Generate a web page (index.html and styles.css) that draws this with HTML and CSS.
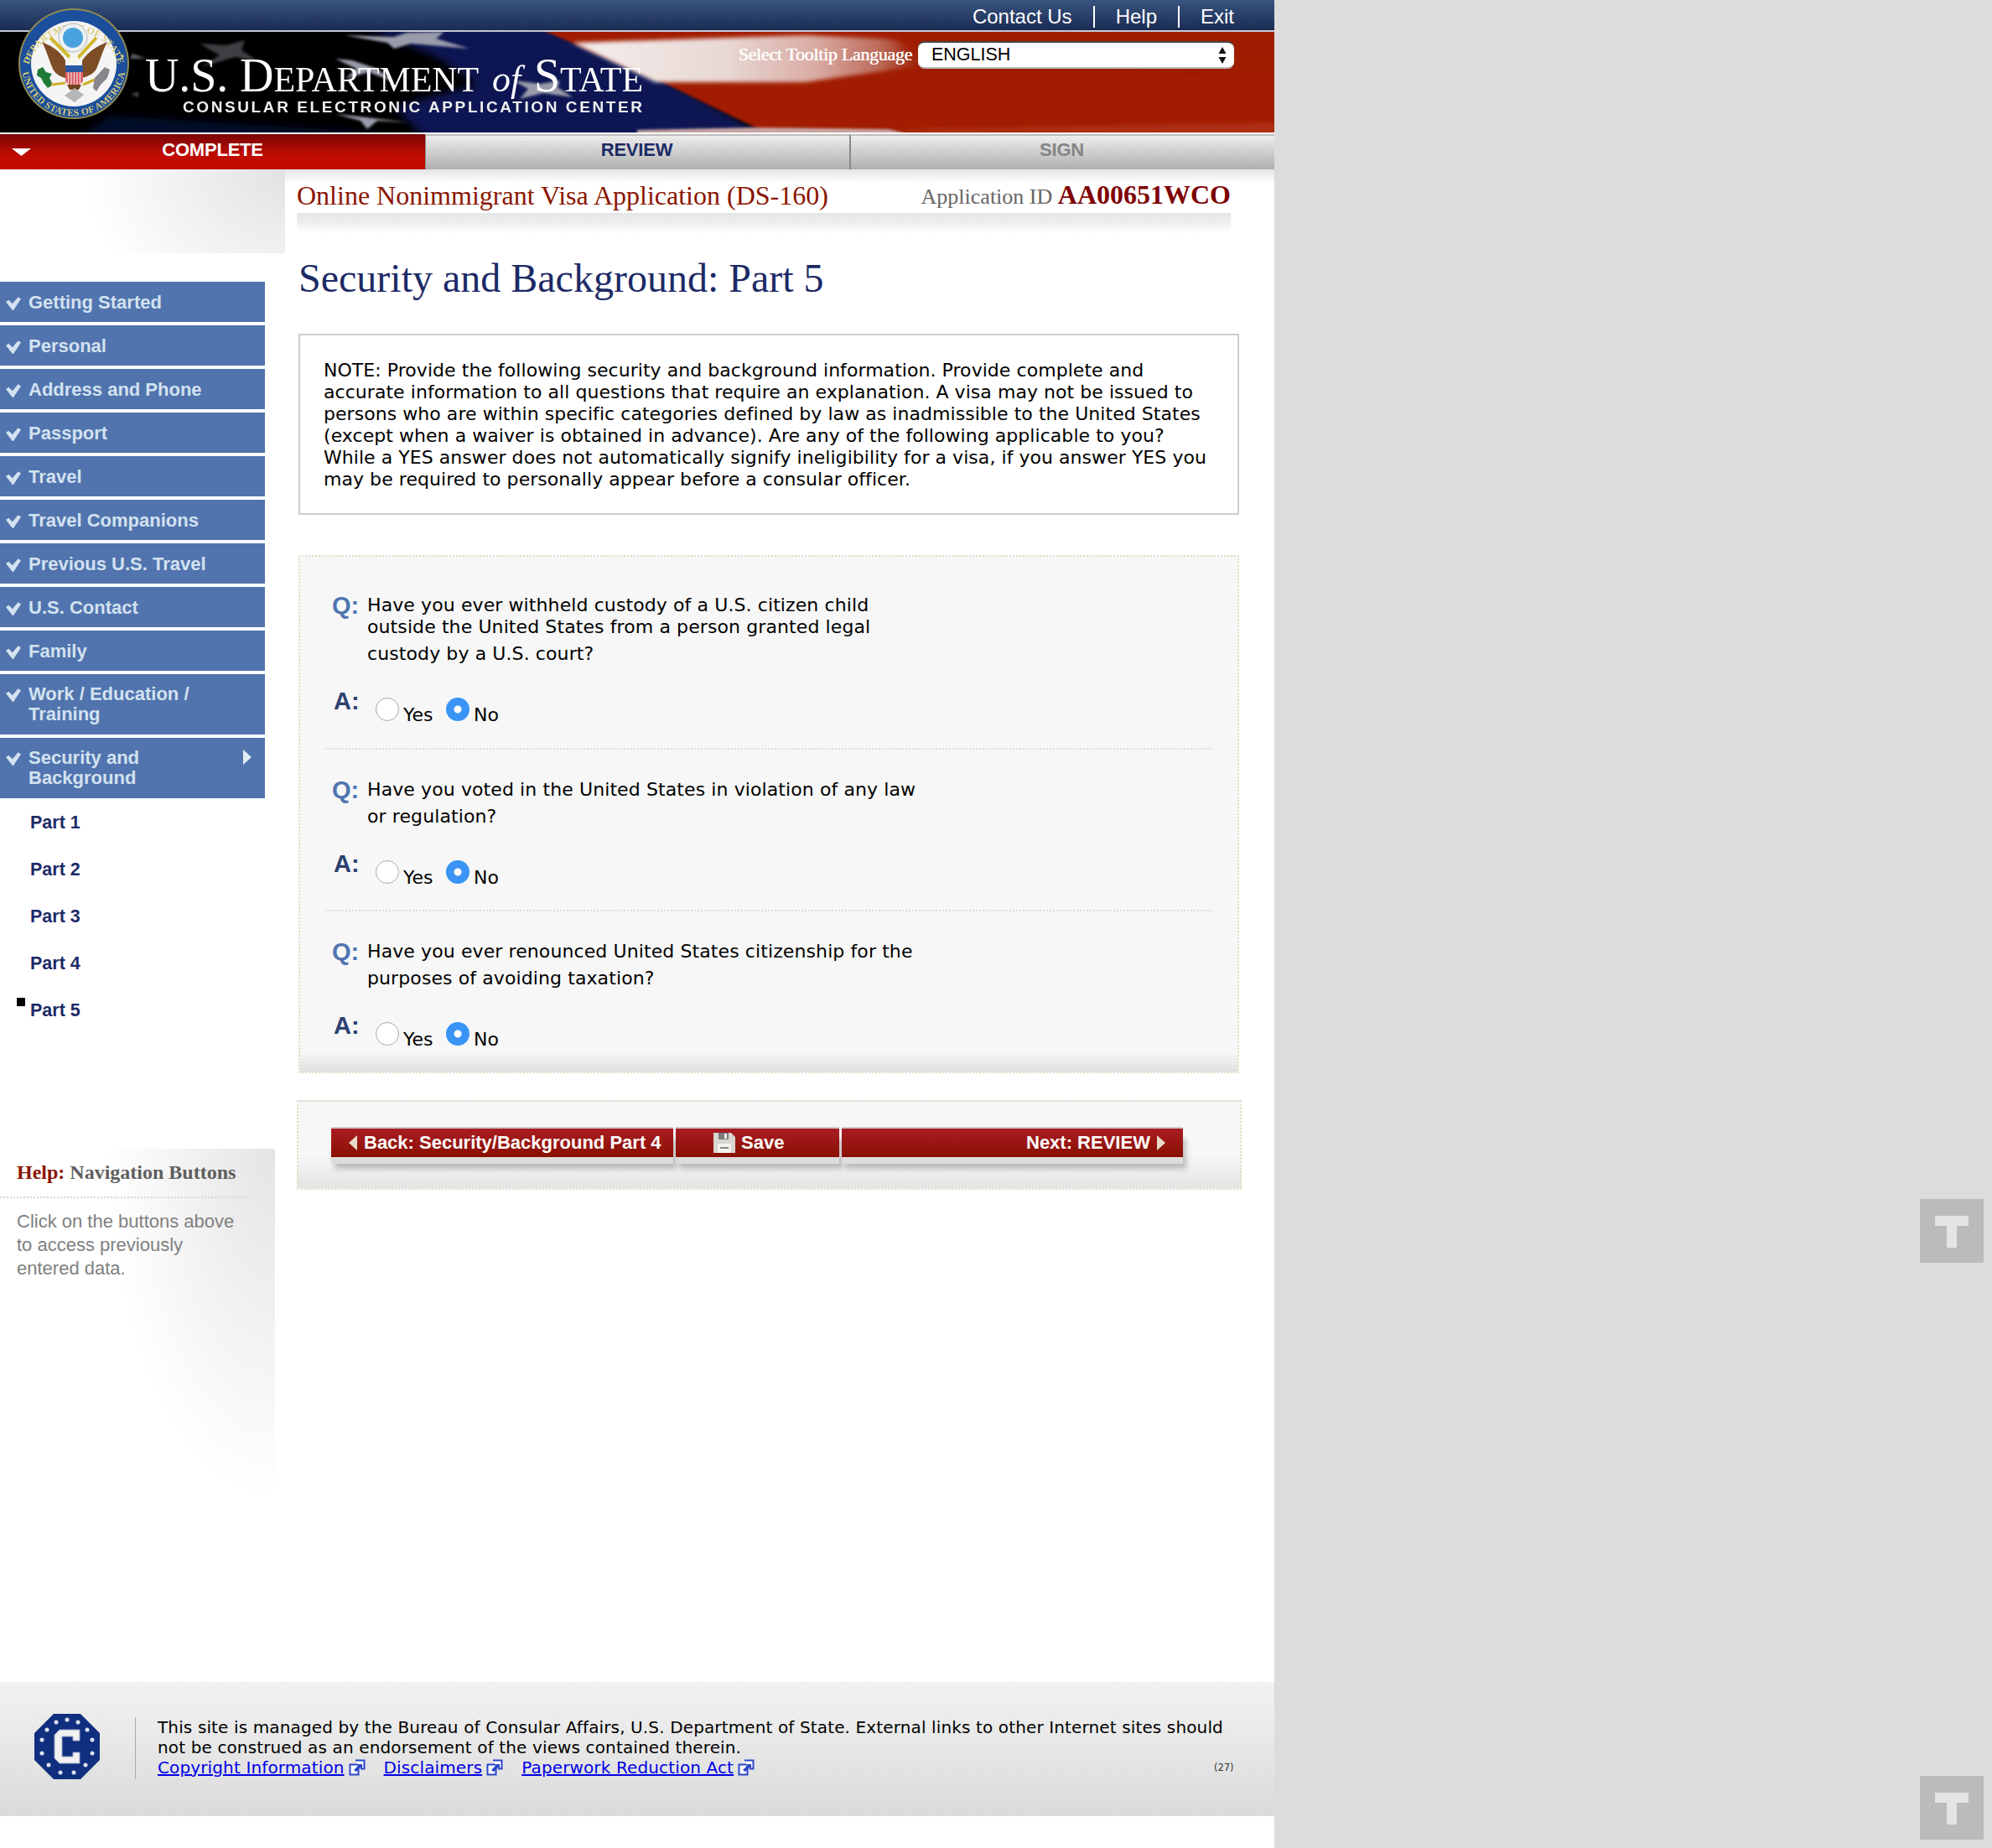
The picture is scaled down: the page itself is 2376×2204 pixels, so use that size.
FILE: index.html
```html
<!DOCTYPE html>
<html lang="en">
<head>
<meta charset="utf-8">
<title>Security and Background: Part 5</title>
<link rel="stylesheet" href="styles.css">
</head>
<body>
<div class="page">
  <header class="masthead">
    <div class="topbar">
      <a class="toplink">Contact Us</a><a class="toplink">Help</a><a class="toplink">Exit</a>
    </div>
    <div class="banner">
      <svg class="flag" viewBox="0 0 1520 120" preserveAspectRatio="none" aria-hidden="true">
        <defs>
          <filter id="b6" x="-10%" y="-30%" width="120%" height="160%"><feGaussianBlur stdDeviation="5"/></filter>
          <filter id="b2" x="-10%" y="-30%" width="120%" height="160%"><feGaussianBlur stdDeviation="2.5"/></filter>
          <filter id="b1" x="-10%" y="-30%" width="120%" height="160%"><feGaussianBlur stdDeviation="1.5"/></filter>
          <linearGradient id="wht" gradientUnits="userSpaceOnUse" x1="680" x2="1090" y1="0" y2="0">
            <stop offset="0" stop-color="#f4efee"/><stop offset=".45" stop-color="#e8d8d4"/><stop offset=".72" stop-color="#d9aaa2"/><stop offset=".9" stop-color="#bb6a58"/><stop offset="1" stop-color="#a32a12"/>
          </linearGradient>
        </defs>
        <rect width="1520" height="120" fill="#000"/>
        <g filter="url(#b6)">
          <polygon points="425,-10 650,-10 800,60 925,130 510,130 470,90 570,62 520,30" fill="#0e1552"/>
          <polygon points="90,130 130,100 260,108 420,118 510,130" fill="#060a2c"/>
        </g>
        <polygon points="645,-3 1530,-3 1530,122 917,122 790,60" fill="#a11a04" filter="url(#b1)"/>
        <polygon points="683,13 960,4 1100,10 1100,40 960,60 782,60" fill="url(#wht)" filter="url(#b2)"/>
        <polygon points="1060,0 1530,0 1530,46 1100,38" fill="#a01c02" filter="url(#b6)"/>
        <polygon points="760,117 900,114 1060,116 1085,122 760,122" fill="#c9a7a5" filter="url(#b1)"/>
        <polygon points="1080,116 1530,108 1530,122 1085,122" fill="#ad2f18" filter="url(#b2)"/>
        <g fill="#9a9cab" filter="url(#b1)">
          <polygon points="485,1 470,6 411,4 462,13 470,20 490,14 560,20 520,8 530,0"/>
          <polygon points="645,62 612,58 630,68 620,80 648,73 683,78 665,66 668,58"/>
          <polygon points="420,34 400,32 425,44 412,56 440,48 470,60 450,44"/>
          <polygon points="420,100 400,98 430,106 438,116 450,106 487,108"/>
          <polygon points="270,16 238,14 262,28 240,42 280,30 310,36 288,22 292,10" opacity=".4"/>
          <polygon points="158,26 175,32 155,32" opacity=".6"/>
          <polygon points="165,72 165,78 156,74" opacity=".5"/>
        </g>
      </svg>
      <svg class="seal" viewBox="0 0 134 134" aria-hidden="true">
        <defs>
          <path id="ring-top" d="M12 76A55.500 55.500 0 0 1 122 76"/>
          <path id="ring-bottom" d="M5 72A62.200 62.200 0 0 0 129 72"/>
        </defs>
        <circle cx="67" cy="67" r="66" fill="#8e8a52"/>
        <circle cx="67" cy="67" r="64" fill="#1c4f9b"/>
        <circle cx="67" cy="67" r="51" fill="#f4f4f4"/>
        <text class="seal-text" text-anchor="middle"><textPath href="#ring-top" startOffset="50%">DEPARTMENT OF STATE</textPath></text>
        <text class="seal-text" text-anchor="middle"><textPath href="#ring-bottom" startOffset="50%">UNITED STATES OF AMERICA</textPath></text>
        <circle cx="11" cy="60" r="1.800" fill="#d6c873"/><circle cx="125" cy="58" r="1.800" fill="#d6c873"/>
        <circle cx="66" cy="36" r="17" fill="#eef0f2" stroke="#b5b5b5"/>
        <circle cx="66" cy="36" r="12" fill="#4aa3df"/>
        <path d="M29 41C36 44 50 50 57 63L57 84C50 82 44 78 42 73C38 64 34 50 29 41Z" fill="#7d4d25"/>
        <path d="M107 41C100 44 86 50 77 63L77 84C84 82 92 78 94 73C98 64 102 50 107 41Z" fill="#7d4d25"/>
        <path d="M39 36L64 61M94 36L71 61" stroke="#d2b72c" stroke-width="4"/>
        <circle cx="67" cy="62" r="6" fill="#f7f6ee"/>
        <rect x="57" y="69" width="21" height="8" fill="#2a57a4"/>
        <path d="M57 77h21v11l-4 4H61l-4-4z" fill="#d96067"/>
        <path d="M60.500 77v15M64 77v15M67.500 77v15M71 77v15M74.500 77v15" stroke="#f4d8d4" stroke-width="1.200"/>
        <path d="M59 92h17l-3 6H62z" fill="#6e4420"/>
        <path d="M24 74l6-3 4 6 7 2-3 5 4 8-6 4-5-6-3-6-5-3z" fill="#1f7a35"/>
        <path d="M40 92l17-2M78 92l14-6" stroke="#cfb02a" stroke-width="3"/>
        <path d="M92 84l12-13 6 3-3 10-8 8-5 8-4-4z" fill="#86868c"/>
        <path d="M56 105l12-9 11 8-11 9z" fill="#b6b6b8"/>
      </svg>
      <div class="brand">
        <div class="brand-name">U.S. D<span class="sc">EPARTMENT</span> <i class="of">of</i> S<span class="sc">TATE</span></div>
        <div class="brand-sub">CONSULAR ELECTRONIC APPLICATION CENTER</div>
      </div>
      <div class="tooltip-lang">
        <label class="tooltip-label" for="lang">Select Tooltip Language</label>
        <div class="select-wrap">
          <select id="lang" class="select"><option>ENGLISH</option></select>
          <svg class="select-arrows" viewBox="0 0 10 22" aria-hidden="true"><path d="M5 1l4.500 8H.5zM5 21L.5 13h9z" fill="#111"/></svg>
        </div>
      </div>
    </div>
  </header>

  <nav class="tabs">
    <a class="tab tab-active"><svg class="tab-caret" viewBox="0 0 23 9" aria-hidden="true"><path d="M0 0h23L11.500 9z" fill="#fff"/></svg>COMPLETE</a>
    <a class="tab tab-review">REVIEW</a>
    <a class="tab tab-sign">SIGN</a>
  </nav>

  <div class="layout">
    <aside class="sidebar">
      <div class="side-top"></div>
      <ul class="steps">
        <li class="step"><svg class="check" viewBox="0 0 16 16"><use href="#tick"/></svg>Getting Started</li>
        <li class="step"><svg class="check" viewBox="0 0 16 16"><use href="#tick"/></svg>Personal</li>
        <li class="step"><svg class="check" viewBox="0 0 16 16"><use href="#tick"/></svg>Address and Phone</li>
        <li class="step"><svg class="check" viewBox="0 0 16 16"><use href="#tick"/></svg>Passport</li>
        <li class="step"><svg class="check" viewBox="0 0 16 16"><use href="#tick"/></svg>Travel</li>
        <li class="step"><svg class="check" viewBox="0 0 16 16"><use href="#tick"/></svg>Travel Companions</li>
        <li class="step"><svg class="check" viewBox="0 0 16 16"><use href="#tick"/></svg>Previous U.S. Travel</li>
        <li class="step"><svg class="check" viewBox="0 0 16 16"><use href="#tick"/></svg>U.S. Contact</li>
        <li class="step"><svg class="check" viewBox="0 0 16 16"><use href="#tick"/></svg>Family</li>
        <li class="step step-tall"><svg class="check" viewBox="0 0 16 16"><use href="#tick"/></svg>Work / Education /<br>Training</li>
        <li class="step step-tall"><svg class="check" viewBox="0 0 16 16"><use href="#tick"/></svg>Security and<br>Background<svg class="step-arrow" viewBox="0 0 10 18"><path d="M0 0l10 9-10 9z" fill="#e3ecf4"/></svg></li>
      </ul>
      <ul class="parts">
        <li class="part">Part 1</li>
        <li class="part">Part 2</li>
        <li class="part">Part 3</li>
        <li class="part">Part 4</li>
        <li class="part part-current">Part 5</li>
      </ul>
      <div class="help">
        <div class="help-title"><span class="help-key">Help:</span> Navigation Buttons</div>
        <p class="help-text">Click on the buttons above<br>to access previously<br>entered data.</p>
      </div>
    </aside>

    <main class="main">
      <div class="title-row">
        <div class="app-title">Online Nonimmigrant Visa Application (DS-160)</div>
        <div class="app-id">Application ID <strong class="app-id-value">AA00651WCO</strong></div>
      </div>
      <div class="title-rule"></div>
      <h1 class="heading">Security and Background: Part 5</h1>
      <div class="note">NOTE: Provide the following security and background information. Provide complete and<br>accurate information to all questions that require an explanation. A visa may not be issued to<br>persons who are within specific categories defined by law as inadmissible to the United States<br>(except when a waiver is obtained in advance). Are any of the following applicable to you?<br>While a YES answer does not automatically signify ineligibility for a visa, if you answer YES you<br>may be required to personally appear before a consular officer.</div>

      <section class="questions">
        <div class="qa">
          <div class="q"><span class="q-mark">Q:</span><div class="q-text"><span class="q-tight">Have you ever withheld custody of a U.S. citizen child<br>outside the United States from a person granted legal</span><br>custody by a U.S. court?</div></div>
          <div class="a"><span class="a-mark">A:</span><span class="radio"></span><span class="opt">Yes</span><span class="radio radio-on"></span><span class="opt">No</span></div>
        </div>
        <div class="qa">
          <div class="q"><span class="q-mark">Q:</span><div class="q-text">Have you voted in the United States in violation of any law<br>or regulation?</div></div>
          <div class="a"><span class="a-mark">A:</span><span class="radio"></span><span class="opt">Yes</span><span class="radio radio-on"></span><span class="opt">No</span></div>
        </div>
        <div class="qa">
          <div class="q"><span class="q-mark">Q:</span><div class="q-text">Have you ever renounced United States citizenship for the<br>purposes of avoiding taxation?</div></div>
          <div class="a"><span class="a-mark">A:</span><span class="radio"></span><span class="opt">Yes</span><span class="radio radio-on"></span><span class="opt">No</span></div>
        </div>
      </section>

      <section class="actions">
        <a class="btn btn-back"><svg class="btn-arrow" viewBox="0 0 10 18"><path d="M10 0L0 9l10 9z" fill="#e8dcc8"/></svg>Back: Security/Background Part 4</a>
        <a class="btn btn-save"><svg class="save-icon" viewBox="0 0 26 24"><path d="M0 0h21l5 5v19H0z" fill="#d9d5d0"/><rect x="6" y="0" width="12" height="8" fill="#7a7a7a"/><rect x="13" y="1" width="3" height="6" fill="#eee"/><rect x="5" y="13" width="16" height="11" fill="#f3f1ee"/><rect x="8" y="17" width="10" height="2" fill="#888"/></svg>Save</a>
        <a class="btn btn-next">Next: REVIEW<svg class="btn-arrow btn-arrow-r" viewBox="0 0 10 18"><path d="M0 0l10 9-10 9z" fill="#e8dcc8"/></svg></a>
      </section>
    </main>
  </div>

  <footer class="footer">
    <svg class="footer-logo" viewBox="0 0 78 78" aria-hidden="true">
      <polygon points="23,0 55,0 78,23 78,55 55,78 23,78 0,55 0,23" fill="#10307f"/>
      <g fill="#dfe3ee"><circle cx="39" cy="7" r="2.500"/><circle cx="26" cy="10" r="2.500"/><circle cx="52" cy="10" r="2.500"/><circle cx="15" cy="19" r="2.500"/><circle cx="63" cy="19" r="2.500"/><circle cx="9" cy="31" r="2.500"/><circle cx="69" cy="31" r="2.500"/><circle cx="9" cy="47" r="2.500"/><circle cx="69" cy="47" r="2.500"/><circle cx="17" cy="61" r="2.500"/><circle cx="61" cy="61" r="2.500"/><circle cx="31" cy="70" r="2.500"/><circle cx="47" cy="70" r="2.500"/></g>
      <path d="M54 19H30l-6 6v28l6 6h24V46h-8v5H33V27h13v5h8z" fill="#f1f1f1" stroke="#9aa6c8"/>
    </svg>
    <div class="footer-text">
      <p class="footer-line">This site is managed by the Bureau of Consular Affairs, U.S. Department of State. External links to other Internet sites should<br>not be construed as an endorsement of the views contained therein.</p>
      <div class="footer-links">
        <a class="flink" href="#">Copyright Information</a><svg class="ext" viewBox="0 0 20 20"><use href="#extlink"/></svg>
        <a class="flink" href="#">Disclaimers</a><svg class="ext" viewBox="0 0 20 20"><use href="#extlink"/></svg>
        <a class="flink" href="#">Paperwork Reduction Act</a><svg class="ext" viewBox="0 0 20 20"><use href="#extlink"/></svg>
      </div>
    </div>
    <span class="footer-code">(27)</span>
  </footer>
</div>

<div class="t-widget t-widget-a"><span class="t-bar"></span><span class="t-stem"></span></div>
<div class="t-widget t-widget-b"><span class="t-bar"></span><span class="t-stem"></span></div>

<svg class="defs" aria-hidden="true">
  <symbol id="tick" viewBox="0 0 16 16"><path d="M0 7l3-2 4 4 6-7 3 2-8 12H7z" fill="#d3e2f0"/></symbol>
  <symbol id="extlink" viewBox="0 0 20 20"><path d="M1.500 6.500h10v12h-10z" fill="#fff" stroke="#2a45c8" stroke-width="2"/><path d="M8 1.500h10.500v10H14" fill="#fff" stroke="#2a45c8" stroke-width="2"/><path d="M6 13l6-6-2-1h6v6l-2-2-5 5z" fill="#2a45c8"/></symbol>
</svg>
</body>
</html>
```
FILE: styles.css
```css
* { box-sizing: border-box; }
html, body { margin: 0; padding: 0; }
body { background: #dcdcdc; font-family: "DejaVu Sans", sans-serif; color: #000; position: relative; min-height: 2204px; }
ul { list-style: none; margin: 0; padding: 0; }
p { margin: 0; }
.defs { width: 0; height: 0; position: absolute; }

.page { width: 1520px; height: 2204px; background: #fff; display: flex; flex-direction: column; }

/* Masthead */
.masthead { position: relative; }
.topbar {
  height: 38px; display: flex; justify-content: flex-end; align-items: center; padding: 3px 48px 0 0;
  background:
    conic-gradient(rgba(255,255,255,.05) 25%, transparent 0 50%, rgba(255,255,255,.05) 0 75%, transparent 0) 0 0/4px 4px,
    linear-gradient(#33507c, #14264f);
  border-bottom: 2px solid #c4c8d2;
}
.toplink { font: 24px "Liberation Sans", Arial, sans-serif; color: #fff; line-height: 26px; padding: 0 25px; border-left: 2px solid #fff; }
.toplink:first-child { border-left: 0; }
.toplink:last-child { padding-right: 0; }

.banner { position: relative; height: 120px; display: flex; justify-content: space-between; overflow: visible; }
.flag { position: absolute; left: 0; top: 0; width: 1520px; height: 120px; }
.seal { position: absolute; left: 21px; top: -29px; width: 134px; height: 134px; }
.seal-text { font: bold 11.5px "Liberation Serif", serif; fill: #d8cc7c; letter-spacing: .3px; }

.brand { position: relative; padding: 26px 0 0 173px; color: #fff; }
.brand-name { font: 56px/52px "Liberation Serif", serif; white-space: nowrap; letter-spacing: -.1px; }
.brand-name .sc { font-size: 42px; }
.brand-name .of { font-size: 44px; margin: 0 2px; }
.brand-sub { font: bold 19px/20px "Liberation Sans", Arial, sans-serif; letter-spacing: 2.6px; margin: -3px 0 0 45px; white-space: nowrap; color: #eee; }

.tooltip-lang { position: relative; display: flex; align-items: flex-start; gap: 7px; padding: 11px 48px 0 0; }
.tooltip-label { font: 22px/32px "Liberation Serif", serif; color: #fff; letter-spacing: -.3px; white-space: nowrap; text-shadow: .4px 0 0 #fff; }
.select-wrap { position: relative; width: 377px; height: 33px; }
.select { appearance: none; -webkit-appearance: none; width: 100%; height: 100%; border: 0; border-top: 2px solid #444; border-bottom: 2px solid #bbb; border-radius: 8px; background: #fff; font: 21.5px "Liberation Sans", Arial, sans-serif; padding: 0 0 2px 16px; color: #000; }
.select-arrows { position: absolute; right: 9px; top: 6px; width: 10px; height: 22px; pointer-events: none; }

/* Tabs */
.tabs { display: flex; margin-top: 2px; height: 42px; }
.tab { flex: 1 1 0; display: flex; align-items: center; justify-content: center; padding-bottom: 6px; font: bold 22px "Liberation Sans", Arial, sans-serif; position: relative; letter-spacing: -.2px; }
.tab-active { color: #fff; padding-bottom: 5px; background:
    conic-gradient(rgba(0,0,0,.07) 25%, transparent 0 50%, rgba(0,0,0,.07) 0 75%, transparent 0) 0 0/4px 4px,
    linear-gradient(#7c0606, #c80c00 60%); flex: 0 0 507px; }
.tab-review, .tab-sign { background:
    conic-gradient(rgba(0,0,0,.06) 25%, transparent 0 50%, rgba(0,0,0,.06) 0 75%, transparent 0) 0 0/4px 4px,
    linear-gradient(#f4f4f4, #b4b4b4); border-top: 2px solid #bdbdbd; }
.tab-review { color: #1c2a66; flex: 0 0 506px; border-left: 1px solid #888; padding-right: 2px; }
.tab-sign { color: #858585; flex: 0 0 507px; border-left: 2px solid #888; padding-right: 2px; }
.tab-caret { position: absolute; left: 14px; top: 17px; width: 23px; height: 9px; }

/* Layout */
.layout { display: grid; grid-template-columns: 340px 1fr; flex: 1 1 auto; background: linear-gradient(#e4e4e4, #fff 16px) 0 0/100% 20px no-repeat; }

/* Sidebar */
.side-top { height: 100px; background: radial-gradient(ellipse 260px 220px at 100% 0, #e2e2e2, #fff 92%); }
.steps { margin-top: 34px; width: 316px; display: flex; flex-direction: column; gap: 4px; }
.step { position: relative; height: 48px; background: #5174ae; color: #d3e2f0; font: bold 22px/24px "Liberation Sans", Arial, sans-serif; padding: 13px 0 0 34px; }
.step-tall { height: 72px; padding-top: 12px; }
.check { position: absolute; left: 7px; top: 16px; width: 18px; height: 18px; }
.step-tall .check { top: 15px; }
.step-arrow { position: absolute; left: 290px; top: 14px; width: 10px; height: 18px; }
.parts { margin-top: 0; }
.part { position: relative; height: 56px; padding: 1px 0 0 36px; font: bold 21.5px/56px "Liberation Sans", Arial, sans-serif; color: #1c2a66; }
.part-current::before { content: ""; position: absolute; left: 20px; top: 14px; width: 10px; height: 10px; background: #000; }
.help { margin-top: 138px; width: 328px; height: 433px; padding: 14px 0 0; background: radial-gradient(ellipse 210px 440px at 100% 0, #e4e4e4, #fff 95%); }
.help-title { font: bold 24px/28px "Liberation Serif", serif; color: #5e5e5e; padding: 0 0 15px 20px; width: 294px; border-bottom: 2px dotted #d6d6d6; white-space: nowrap; }
.help-key { color: #8a1500; }
.help-text { font: 22px/28px "Liberation Sans", Arial, sans-serif; color: #808080; padding: 14px 0 0 20px; }

/* Main */
.main { margin-left: 14px; width: 1128px; }
.title-row { width: 1114px; height: 52px; display: flex; justify-content: space-between; align-items: flex-end; white-space: nowrap; }
.app-title { font: 32px/42px "Liberation Serif", serif; color: #8a1500; }
.app-id { font: 26px/38px "Liberation Serif", serif; color: #666; }
.app-id-value { font-size: 32px; color: #7e0000; }
.title-rule { width: 1114px; height: 26px; background:
    conic-gradient(rgba(0,0,0,.035) 25%, transparent 0 50%, rgba(0,0,0,.035) 0 75%, transparent 0) 0 0/4px 4px,
    linear-gradient(#e9e9e9, #fff); -webkit-mask: linear-gradient(#000 50%, transparent); mask: linear-gradient(#000 50%, transparent); }
.heading { margin: 22px 0 0 2px; font: 48px/60px "Liberation Serif", serif; font-weight: normal; color: #1c2a66; white-space: nowrap; }
.note { margin: 36px 0 0 2px; width: 1122px; height: 216px; border: 2px solid #ccc; padding: 29px 0 0 28px; font-size: 22px; letter-spacing: .05px; line-height: 26px; white-space: nowrap; }

.questions { margin: 48px 0 0 2px; width: 1122px; height: 618px; border: 2px dotted #e6dcc4; padding: 0 30px 0 30px; background: linear-gradient(#f7f7f7, #e0e0e0) 0 100%/100% 24px no-repeat, #f7f7f7; }
.qa { height: 230px; border-bottom: 2px dotted #ddd; }
.qa + .qa { height: 193px; }
.qa:last-child { border-bottom: 0; }
.q { display: flex; padding: 42px 0 0 8px; }
.qa + .qa .q { padding-top: 32px; }
.q-mark { width: 42px; font: bold 29px/32px "Liberation Sans", Arial, sans-serif; color: #4f74b0; }
.q-text { font-size: 22px; letter-spacing: .1px; line-height: 32px; white-space: nowrap; }
.q-tight { display: inline-block; line-height: 26px; margin: 3px 0 -3px; }
.a { display: flex; align-items: flex-start; padding: 24px 0 0 10px; }
.a-mark { width: 50px; font: bold 29px/32px "Liberation Sans", Arial, sans-serif; color: #2c4170; }
.radio { width: 28px; height: 28px; border-radius: 50%; background: #fff; border: 1.5px solid #aaa; margin-top: 12px; flex: none; }
.radio-on { background: radial-gradient(circle, #fff 0 4px, #3a94f6 5px); border: 0; margin-left: 14px; }
.opt { font-size: 22px; line-height: 26px; margin: 20px 0 0 5px; width: 37px; }

.actions { margin: 32px 0 0 0; width: 1127px; height: 107px; border: 2px dotted #e6dcc4; padding: 30px 0 0 39px; display: flex; gap: 3px; background: linear-gradient(#f7f7f7 60%, #e4e4e4); }
.btn { display: flex; align-items: center; height: 36px; border-top: 2px solid #ccc; color: #fff; font: bold 22px "Liberation Sans", Arial, sans-serif; background: linear-gradient(#aa1c24, #881000); box-shadow: 0 8px 0 #dedbd9, 4px 14px 6px rgba(0,0,0,.22); white-space: nowrap; }
.btn-back { width: 408px; padding-left: 21px; }
.btn-save { width: 195px; padding-left: 45px; }
.btn-next { width: 407px; padding-left: 220px; }
.btn-arrow { width: 10px; height: 18px; margin-right: 8px; }
.btn-arrow-r { margin: 0 0 0 8px; }
.save-icon { width: 26px; height: 24px; margin-right: 7px; }

/* Footer */
.footer { flex: 0 0 160px; margin-bottom: 38px; display: flex; align-items: flex-start; padding: 38px 0 0 41px; position: relative; background:
    conic-gradient(rgba(0,0,0,.03) 25%, transparent 0 50%, rgba(0,0,0,.03) 0 75%, transparent 0) 0 0/4px 4px,
    linear-gradient(#f6f6f6, #dedede); }
.footer-logo { width: 78px; height: 78px; flex: none; }
.footer-text { margin-left: 42px; height: 74px; padding: 0 0 0 26px; border-left: 1px solid #aaa; margin-top: 4px; font-size: 20px; letter-spacing: .13px; line-height: 24px; white-space: nowrap; }
.footer-links { display: flex; align-items: center; }
.flink { color: #0000e6; text-decoration: underline; }
.ext { width: 20px; height: 20px; margin: 0 22px 0 5px; }
.footer-code { position: absolute; left: 1448px; top: 95px; font-size: 11.5px; color: #333; }

/* Floating T widgets */
.t-widget { position: absolute; left: 2290px; width: 76px; height: 76px; background: #bbb; }
.t-widget-a { top: 1430px; }
.t-widget-b { top: 2118px; }
.t-bar { position: absolute; left: 18px; top: 20px; width: 40px; height: 12px; background: #e4e4e4; }
.t-stem { position: absolute; left: 32px; top: 32px; width: 12px; height: 26px; background: #e4e4e4; }
```
